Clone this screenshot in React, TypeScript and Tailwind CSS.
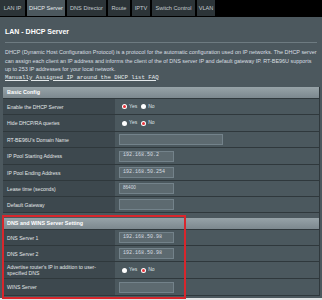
import React from 'react';

const tabs = [
  { label: 'LAN IP', w: 'w-[25px]' },
  { label: 'DHCP Server', w: 'w-[38px]', active: true },
  { label: 'DNS Director', w: 'w-[39px]' },
  { label: 'Route', w: 'w-[22px]' },
  { label: 'IPTV', w: 'w-[18px]' },
  { label: 'Switch Control', w: 'w-[43px]' },
  { label: 'VLAN', w: 'w-[18px]' },
];

const Radio = ({ on }: { on?: boolean }) => (
  <span className="w-[5px] h-[5px] rounded-full bg-white flex items-center justify-center">
    {on && <span className="w-[3px] h-[3px] rounded-full bg-[#e8323a]" />}
  </span>
);

const YesNo = ({ yes }: { yes: boolean }) => (
  <div className="flex items-center text-[5px] text-[#dfe5e7] pl-[7px]">
    <Radio on={yes} />
    <span className="ml-[2px]">Yes</span>
    <span className="ml-[4px]"><Radio on={!yes} /></span>
    <span className="ml-[2px]">No</span>
  </div>
);

const Input = ({ value, w = 'w-[55px]', mono = true }: { value?: string; w?: string; mono?: boolean }) => (
  <div
    className={`${w} h-[11px] ml-[4px] bg-[#5d6a70] border border-[#73828a] flex items-center pl-[3px] text-[#d7dde0] ${
      mono ? "font-['Liberation_Mono'] text-[5px]" : 'text-[4.6px]'
    }`}
  >
    {value}
  </div>
);

const Row = ({ label, children, h = 'h-[16px]' }: { label: React.ReactNode; children?: React.ReactNode; h?: string }) => (
  <div className={`flex ${h} border-b border-[#2f383c]`}>
    <div className="w-[112px] bg-[#3d484e] flex items-center pl-[4px] text-[5.1px] leading-[6px] text-[#e2e7e9]">
      {label}
    </div>
    <div className="flex-1 bg-[#4b585e] flex items-center">{children}</div>
  </div>
);

const Header = ({ title }: { title: string }) => (
  <div className="h-[12px] bg-gradient-to-b from-[#97a3a8] to-[#7c888e] flex items-center pl-[4px] text-[5.4px] font-bold text-white border-b border-[#2f383c]">
    {title}
  </div>
);

export default function App() {
  return (
    <div className="w-[322px] h-[300px] overflow-hidden bg-[#e4e6e7] font-['Liberation_Sans',Arial,sans-serif] relative">
      <div className="h-[298px] bg-[#4c585e]">
        {/* Tabs */}
        <div className="flex h-[17px] bg-black gap-[2px]">
          {tabs.map(t => (
            <div
              key={t.label}
              className={`${t.w} h-[16px] flex items-center justify-center text-[5.6px] whitespace-nowrap ${
                t.active ? 'bg-[#4c585e] text-[#e6ebed]' : 'bg-[#2c3438] text-[#c3cbcf]'
              }`}
            >
              {t.label}
            </div>
          ))}
        </div>

        <div className="px-[5px]">
          <div className="mt-[10px] text-[7px] leading-[9px] font-bold text-white">LAN - DHCP Server</div>
          <div className="mt-[6px] h-px bg-[#6e7b81]" />
          <div className="mt-[5px] text-[5.45px] leading-[8.5px] text-[#d9dfe2] whitespace-nowrap">
            DHCP (Dynamic Host Configuration Protocol) is a protocol for the automatic configuration used on IP networks. The DHCP server
            <br />
            can assign each client an IP address and informs the client of the of DNS server IP and default gateway IP. RT-BE96U supports
            <br />
            up to 253 IP addresses for your local network.
          </div>
          <div className="text-[5.7px] leading-[8.5px] font-['Liberation_Mono'] text-[#e4e9eb] underline whitespace-nowrap">
            Manually Assigned IP around the DHCP list FAQ
          </div>
        </div>

        {/* Basic Config */}
        <div className="mt-[5px] ml-[3px] mr-[2px] border-r border-[#2f383c]">
          <Header title="Basic Config" />
          <Row label="Enable the DHCP Server">
            <YesNo yes />
          </Row>
          <Row h="h-[17px]" label="Hide DHCP/RA queries">
            <YesNo yes={false} />
          </Row>
          <Row label="RT-BE96U's Domain Name">
            <Input w="w-[104px]" />
          </Row>
          <Row h="h-[17px]" label="IP Pool Starting Address">
            <Input value="192.168.50.2" />
          </Row>
          <Row label="IP Pool Ending Address">
            <Input value="192.168.50.254" />
          </Row>
          <Row label="Lease time (seconds)">
            <Input value="86400" mono={false} />
          </Row>
          <Row label="Default Gateway">
            <Input />
          </Row>

          {/* DNS and WINS */}
          <div className="mt-[5px]">
            <Header title="DNS and WINS Server Setting" />
            <Row label="DNS Server 1">
              <Input value="192.168.50.98" />
            </Row>
            <Row label="DNS Server 2">
              <Input value="192.168.50.98" />
            </Row>
            <Row
              h="h-[17px]"
              label={
                <span>
                  Advertise router's IP in addition to user-
                  <br />
                  specified DNS
                </span>
              }
            >
              <YesNo yes={false} />
            </Row>
            <Row h="h-[17px]" label="WINS Server">
              <Input />
            </Row>
          </div>
        </div>
      </div>

      {/* annotation box */}
      <div className="absolute left-[2px] top-[215px] w-[184px] h-[84px] border-2 border-[#d8262c] pointer-events-none" />
    </div>
  );
}
